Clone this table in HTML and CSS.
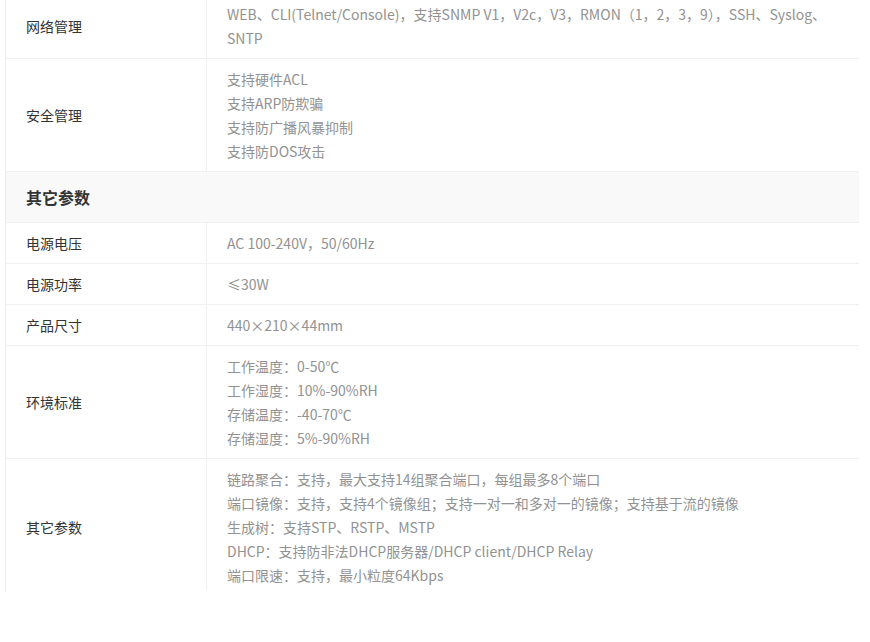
FILE: index.html
```html
<!DOCTYPE html>
<html lang="zh-CN">
    <head>
        <meta charset="UTF-8" />
        <meta name="viewport" content="width=device-width, initial-scale=1.0" />
        <title>产品参数</title>
        <link rel="stylesheet" href="styles.css">
    </head>
    <body>
        <div class="specs">
            <table class="spec-table">
                <tr>
                    <td class="label">网络管理</td>
                    <td class="value">WEB、CLI(Telnet/Console)，支持SNMP V1，V2c，V3，RMON（1，2，3，9），SSH、Syslog、SNTP</td>
                </tr>
                <tr>
                    <td class="label">安全管理</td>
                    <td class="value">
                        <p>支持硬件ACL</p>
                        <p>支持ARP防欺骗</p>
                        <p>支持防广播风暴抑制</p>
                        <p>支持防DOS攻击</p>
                    </td>
                </tr>
                <tr class="group">
                    <td colspan="2">其它参数</td>
                </tr>
                <tr>
                    <td class="label">电源电压</td>
                    <td class="value">AC 100-240V，50/60Hz</td>
                </tr>
                <tr>
                    <td class="label">电源功率</td>
                    <td class="value">≤30W</td>
                </tr>
                <tr>
                    <td class="label">产品尺寸</td>
                    <td class="value">440×210×44mm</td>
                </tr>
                <tr>
                    <td class="label">环境标准</td>
                    <td class="value">
                        <p>工作温度：0-50℃</p>
                        <p>工作湿度：10%-90%RH</p>
                        <p>存储温度：-40-70℃</p>
                        <p>存储湿度：5%-90%RH</p>
                    </td>
                </tr>
                <tr>
                    <td class="label">其它参数</td>
                    <td class="value">
                        <p>链路聚合：支持，最大支持14组聚合端口，每组最多8个端口</p>
                        <p>端口镜像：支持，支持4个镜像组；支持一对一和多对一的镜像；支持基于流的镜像</p>
                        <p>生成树：支持STP、RSTP、MSTP</p>
                        <p>DHCP：支持防非法DHCP服务器/DHCP client/DHCP Relay</p>
                        <p>端口限速：支持，最小粒度64Kbps</p>
                    </td>
                </tr>
            </table>
        </div>
    </body>
</html>
```

FILE: styles.css
```css
* {
    margin: 0;
    padding: 0;
    box-sizing: border-box;
}
body {
    background: #fff;
    font-family: 'Noto Sans CJK SC', 'Noto Sans', sans-serif;
    font-size: 14px;
    color: #333;
}
.specs {
    height: 591px;
    overflow: hidden;
    padding-left: 5px;
}
.spec-table {
    width: 854px;
    margin-top: -6px;
    border-collapse: collapse;
    border-left: 1px solid #ececec;
}
.spec-table td {
    padding: 8px 20px;
    line-height: 24px;
    vertical-align: middle;
    border-bottom: 1px solid #f0f0f0;
}
.spec-table .label {
    width: 201px;
    color: #333;
    border-right: 1px solid #f0f0f0;
}
.spec-table .value {
    color: #929292;
}
.spec-table .group td {
    height: 51px;
    padding: 0 20px;
    background: #f9f9f9;
    font-size: 16px;
    font-weight: bold;
    color: #333;
}
```
